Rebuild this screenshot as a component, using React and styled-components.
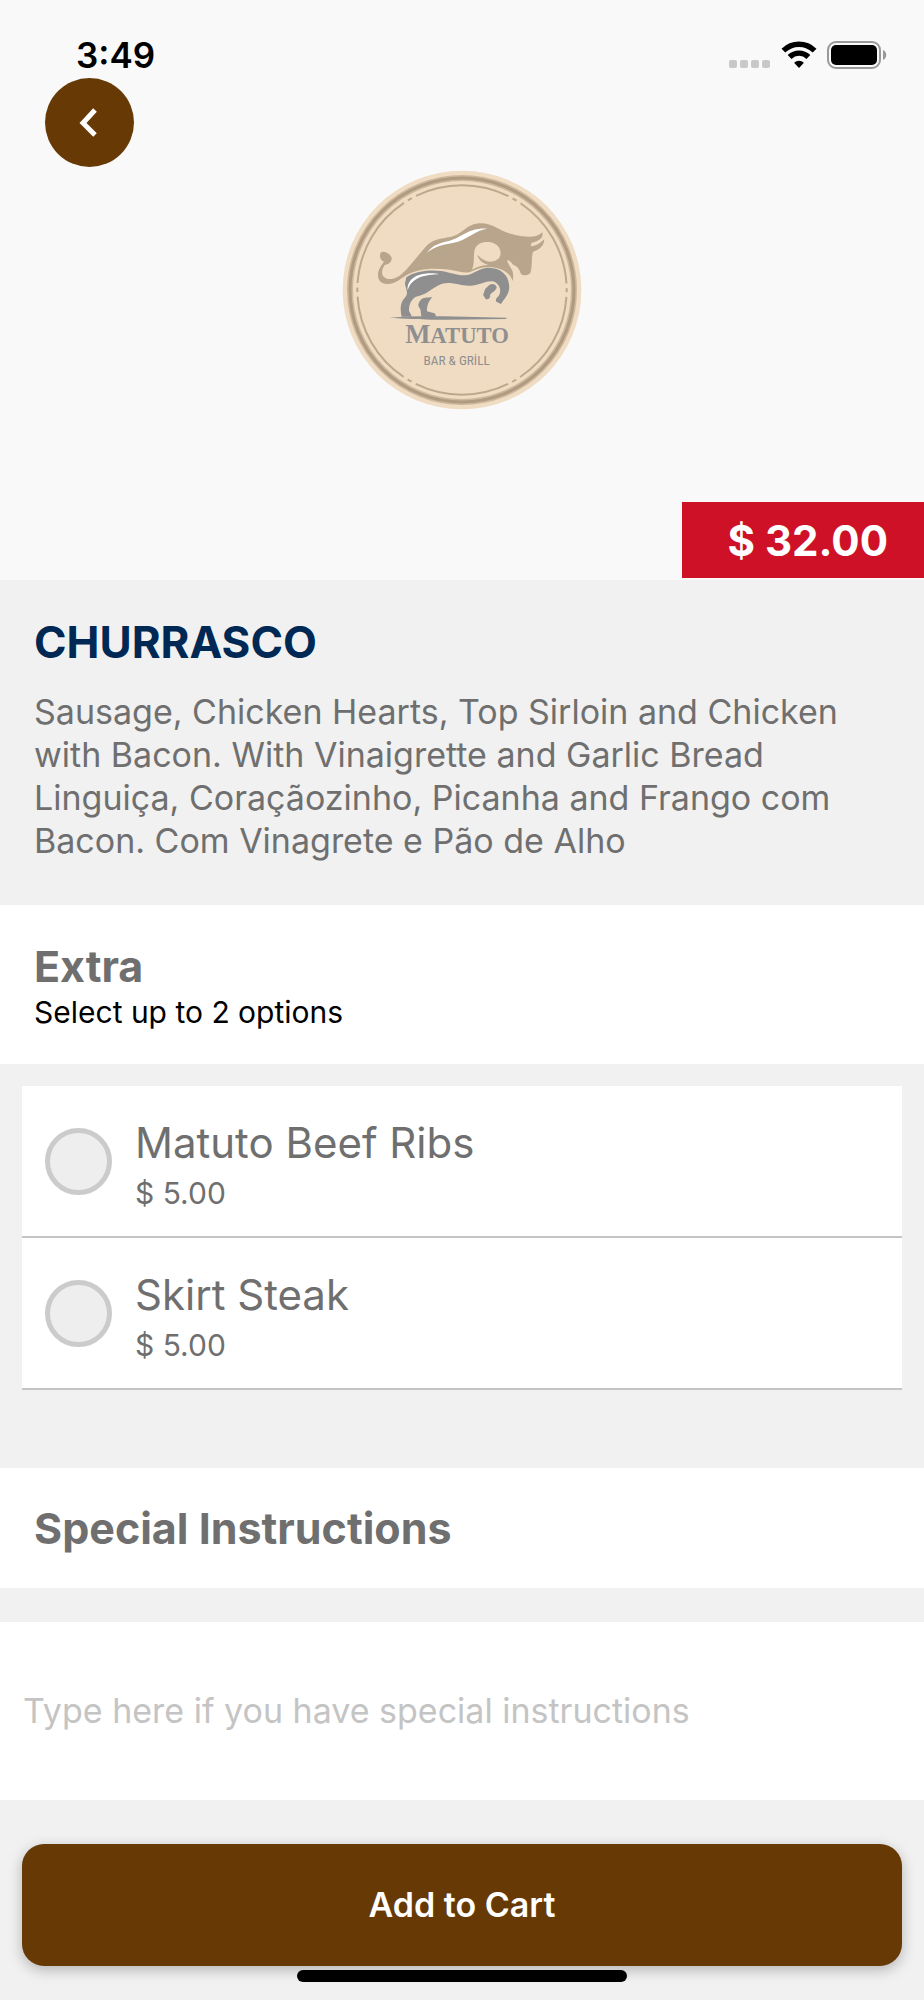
import React, { useState } from 'react'
import styled, { createGlobalStyle } from 'styled-components'

const PColor = '#673905'
const BGColor = '#f1f1f1'
const TextColor = '#6f6f6f'

const extras = [
    { id: 'beef-ribs', name: 'Matuto Beef Ribs', price: '$ 5.00' },
    { id: 'skirt-steak', name: 'Skirt Steak', price: '$ 5.00' }
]

const MAX_EXTRAS = 2

const App = () => {
    const [selected, setSelected] = useState([])
    const [notes, setNotes] = useState('')

    const toggle = id => {
        if (selected.includes(id)) return setSelected(selected.filter(x => x !== id))
        if (selected.length < MAX_EXTRAS) setSelected([...selected, id])
    }

    return (
        <>
            <GlobalStyle />
            <Screen>
                <Hero>
                    <StatusBar />
                    <BackButton type='button' aria-label='Back'>
                        <svg width='18' height='30' viewBox='0 0 18 30' fill='none' stroke='#fff' strokeWidth='5'>
                            <path d='M16 2 L4 15 L16 27' />
                        </svg>
                    </BackButton>
                    <LogoBox>
                        <MatutoLogo />
                    </LogoBox>
                    <PriceTag>$ 32.00</PriceTag>
                </Hero>
                <Product>
                    <ProductName>CHURRASCO</ProductName>
                    <Description>
                        Sausage, Chicken Hearts, Top Sirloin and Chicken with Bacon. With Vinaigrette and Garlic Bread
                        <br />
                        Linguiça, Coraçãozinho, Picanha and Frango com Bacon. Com Vinagrete e Pão de Alho
                    </Description>
                </Product>
                <SectionHead>
                    <SectionTitle id='extra-title'>Extra</SectionTitle>
                    <Hint>Select up to 2 options</Hint>
                </SectionHead>
                <OptionList aria-labelledby='extra-title'>
                    {extras.map(({ id, name, price }) => (
                        <li key={id}>
                            <Option htmlFor={id}>
                                <Check
                                    type='checkbox'
                                    id={id}
                                    checked={selected.includes(id)}
                                    onChange={() => toggle(id)}
                                />
                                <OptionText>
                                    <OptionName>{name}</OptionName>
                                    <OptionPrice>{price}</OptionPrice>
                                </OptionText>
                            </Option>
                        </li>
                    ))}
                </OptionList>
                <SectionHead $compact>
                    <SectionTitle as='label' htmlFor='notes'>Special Instructions</SectionTitle>
                </SectionHead>
                <Notes
                    id='notes'
                    type='text'
                    placeholder='Type here if you have special instructions'
                    value={notes}
                    onChange={e => setNotes(e.target.value)}
                />
                <Footer>
                    <CartButton type='button'>Add to Cart</CartButton>
                    <HomeIndicator />
                </Footer>
            </Screen>
        </>
    )
}

const StatusBar = () => (
    <Status>
        <Time>3:49</Time>
        <StatusIcons>
            <svg width='42' height='28' viewBox='0 0 42 28' fill='#c8c8c8'>
                <rect x='0' y='19' width='8' height='8' rx='2' />
                <rect x='11' y='19' width='8' height='8' rx='2' />
                <rect x='22' y='19' width='8' height='8' rx='2' />
                <rect x='33' y='19' width='8' height='8' rx='2' />
            </svg>
            <svg width='36' height='28' viewBox='0 0 36 28'>
                <g fill='none' stroke='#000' strokeWidth='5.4'>
                    <path d='M2.4 9.6 A22.4 22.4 0 0 1 33.6 9.6' />
                    <path d='M8.6 16 A13.4 13.4 0 0 1 27.4 16' />
                </g>
                <path d='M18 27 L13.1 21.8 A7 7 0 0 1 22.9 21.8 Z' />
            </svg>
            <svg width='60' height='28' viewBox='0 0 60 28'>
                <rect x='1' y='1' width='52' height='26' rx='8' fill='none' stroke='#999' strokeWidth='2' />
                <rect x='4' y='4' width='46' height='20' rx='5' />
                <path d='M56 9 A5.5 5.5 0 0 1 56 19 Z' fill='#999' />
            </svg>
        </StatusIcons>
    </Status>
)

const MatutoLogo = () => (
    <svg width='240' height='240' viewBox='37 31 720 720' role='img' aria-label='Matuto Bar & Grill'>
        <circle cx='397' cy='391' r='358' fill='#f0dcc3' />
        <circle cx='397' cy='391' r='336' fill='none' stroke='#cdb89d' strokeWidth='18' />
        <circle cx='397' cy='391' r='336' fill='none' stroke='#b09a80' strokeWidth='9' />
        {/* thin ring, broken every 60 degrees around a short dash */}
        <circle
            cx='397'
            cy='391'
            r='314'
            fill='none'
            stroke='#bea88d'
            strokeWidth='6'
            pathLength='1980'
            strokeDasharray='14 14 288 14'
            strokeDashoffset='7'
        />
        {/* bull */}
        <path d='M153 279 C161 272 180 280 186 294 C188 306 174 316 166 315 C157 326 154 342 162 351 C176 365 203 356 216 343 C240 322 262 291 288 261 C316 230 356 240 385 223 C408 209 419 193 449 191 C489 189 508 214 543 222 C579 231 618 239 638 218 C642 235 628 244 606 249 C604 253 603 257 604 260 C621 258 632 250 644 239 C643 258 631 270 610 276 C604 295 609 321 602 340 C594 348 581 349 574 343 C570 328 562 318 550 315 C545 308 538 301 533 301 C531 307 542 320 547 331 C552 343 551 354 549 364 C541 343 526 330 501 325 C475 318 451 323 430 333 C405 346 382 332 348 329 C302 324 253 329 218 354 C192 376 160 380 149 362 C138 341 151 322 163 306 C151 302 148 288 153 279 Z' fill='#b9a58b' />
        <path d='M427 330 C436 309 430 289 435 270 C441 250 463 244 484 248 C508 254 517 273 511 290 C504 306 481 310 468 303 C457 299 449 290 442 285 C448 302 461 313 478 316 C459 316 442 321 427 330 Z' fill='#f0dcc3' />
        <path d='M292 279 C309 254 335 249 360 243 C397 234 415 204 472 207 C436 212 412 241 373 249 C340 255 316 259 292 279 Z' fill='#fff' />
        {/* legs */}
        <g fill='#8f8f90'>
            <path d='M230 353 C254 335 297 329 334 334 C371 339 395 355 426 342 C450 330 468 320 491 326 C520 331 535 350 538 374 C542 400 527 414 514 433 L500 426 C496 421 501 414 507 409 C517 393 510 374 494 366 C474 360 452 376 425 378 C390 381 369 364 335 373 C309 383 290 407 259 411 C241 421 238 439 238 453 L247 471 L216 471 C211 451 211 429 225 415 C240 400 226 386 226 371 Z' />
            <path d='M308 412 C300 421 290 437 292 455 L314 461 C320 464 320 470 315 472 L277 473 C271 465 277 453 268 443 C262 434 272 419 280 416 C289 411 299 415 308 412 Z' />
            <path d='M479 376 C488 370 500 375 501 383 C500 395 481 400 481 408 C483 416 474 420 468 418 L460 405 C465 399 463 389 470 384 Z' />
            <path d='M179 474 C235 469 292 470 341 470 L530 474 L530 478 L350 480 C285 481 227 477 179 474 Z' />
        </g>
        <path d='M234 392 C231 361 260 344 285 342 C304 340 319 341 329 344 C288 345 246 352 234 392 Z' fill='#fff' />
        <LogoName x='382' y='549' textAnchor='middle'>
            M<tspan fontSize='68'>ATUTO</tspan>
        </LogoName>
        <LogoTag x='381' y='616' textAnchor='middle'>BAR &amp; GRİLL</LogoTag>
    </svg>
)

const GlobalStyle = createGlobalStyle`
*, *::before, *::after {
    box-sizing: border-box;
}
body {
    margin: 0;
    background-color: ${ BGColor };
    font-family: Inter, "Liberation Sans", sans-serif;
}
h1, h2, p, ul {
    margin: 0;
    padding: 0;
}
button, input {
    font-family: inherit;
}
`
const Screen = styled.main`
    display: flex;
    flex-direction: column;
    min-height: 100vh;
    background-color: ${ BGColor };
`
const Hero = styled.header`
    display: flex;
    flex-direction: column;
    padding-bottom: 2px;
    background-color: #f9f9f9;
`
const Status = styled.div`
    display: flex;
    justify-content: space-between;
    align-items: center;
    padding: 33px 37px 1px 76px;
`
const Time = styled.span`
    font-size: 35px;
    line-height: 44px;
    font-weight: 600;
    color: #000;
`
const StatusIcons = styled.div`
    display: flex;
    align-items: center;
    gap: 10px;
`
const BackButton = styled.button`
    display: flex;
    justify-content: center;
    align-items: center;
    width: 89px;
    height: 89px;
    margin-left: 45px;
    padding: 0 4px 0 0;
    border: 0;
    border-radius: 50%;
    background-color: ${ PColor };
    cursor: pointer;
`
const LogoBox = styled.div`
    display: flex;
    justify-content: center;
    padding: 3px 0 92px;
`
const LogoName = styled.text`
    font-family: "Liberation Serif", serif;
    font-size: 80px;
    font-weight: 700;
    fill: #8f8f90;
`
const LogoTag = styled.text`
    font-family: "Liberation Sans Narrow", "Roboto Condensed", "Liberation Sans", sans-serif;
    font-size: 40px;
    fill: #8f8f90;
`
const PriceTag = styled.div`
    align-self: flex-end;
    padding: 11px 36px 9px 46px;
    font-size: 42px;
    line-height: 56px;
    font-weight: 700;
    color: #fff;
    background-color: #ce1126;
`
const Product = styled.section`
    padding: 34px 34px 43px;
`
const ProductName = styled.h1`
    font-size: 44px;
    line-height: 56px;
    font-weight: 700;
    color: #002855;
`
const Description = styled.p`
    padding-top: 20px;
    font-size: 34px;
    line-height: 43px;
    color: ${ TextColor };
`
const SectionHead = styled.div`
    padding: ${ ({ $compact }) => $compact ? '32px 34px' : '33px 34px 34px' };
    background-color: #fff;
`
const SectionTitle = styled.h2`
    display: block;
    font-size: 43px;
    line-height: 56px;
    font-weight: 700;
    color: ${ TextColor };
`
const Hint = styled.p`
    font-size: 30px;
    line-height: 36px;
    color: #000;
`
const OptionList = styled.ul`
    margin: 22px 22px 78px;
    list-style: none;
`
const Option = styled.label`
    display: flex;
    align-items: center;
    gap: 23px;
    padding: 22px 23px;
    border-bottom: 2px solid #c4c4c4;
    background-color: #fff;
    cursor: pointer;
`
const Check = styled.input`
    appearance: none;
    flex-shrink: 0;
    width: 67px;
    height: 67px;
    margin: 0;
    border: 5px solid #cbcbcb;
    border-radius: 50%;
    background-color: #eee;
    cursor: pointer;
    &:checked {
        background-color: ${ PColor };
    }
`
const OptionText = styled.span`
    display: flex;
    flex-direction: column;
    padding-top: 6px;
    color: ${ TextColor };
`
const OptionName = styled.span`
    font-size: 42px;
    line-height: 58px;
`
const OptionPrice = styled.span`
    font-size: 30px;
    line-height: 42px;
`
const Notes = styled.input`
    width: 100%;
    height: 178px;
    margin-top: 34px;
    padding: 0 23px 2px;
    border: 0;
    border-radius: 0;
    outline: 0;
    font-size: 34px;
    color: ${ TextColor };
    background-color: #fff;
    &::placeholder {
        color: #c4c4c4;
        opacity: 1;
    }
`
const Footer = styled.footer`
    display: flex;
    flex-direction: column;
    align-items: center;
    gap: 4px;
    padding: 44px 22px 18px;
`
const CartButton = styled.button`
    width: 100%;
    padding: 39px 22px;
    border: 0;
    border-radius: 22px;
    font-size: 34px;
    line-height: 44px;
    font-weight: 600;
    color: #fff;
    background-color: ${ PColor };
    box-shadow: 0 4px 14px rgba(0, 0, 0, 0.25);
    cursor: pointer;
`
const HomeIndicator = styled.div`
    width: 37.5%;
    height: 12px;
    border-radius: 6px;
    background-color: #000;
`

export default App
